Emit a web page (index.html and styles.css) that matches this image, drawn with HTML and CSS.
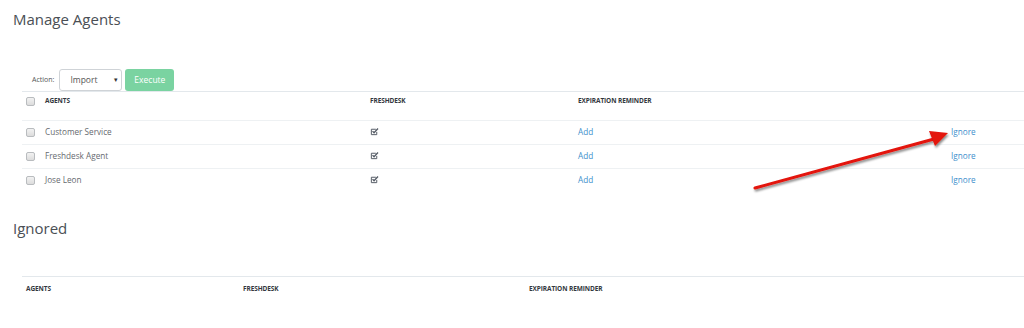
FILE: index.html
```html
<!DOCTYPE html>
<html>
<head>
  <title>Manage Agents</title>
  <link rel="stylesheet" href="styles.css">
</head>
<body>
  <div class="page">
    <h1 class="title">Manage Agents</h1>

    <div class="actions">
      <span class="action-label">Action:</span>
      <div class="select">Import<span class="caret">&#9662;</span></div>
      <button class="execute">Execute</button>
    </div>

    <table class="agents">
      <colgroup>
        <col class="c-check">
        <col class="c-name">
        <col class="c-fd">
        <col class="c-rem">
        <col class="c-act">
      </colgroup>
      <thead>
        <tr>
          <th><span class="box"></span></th>
          <th>Agents</th>
          <th>Freshdesk</th>
          <th>Expiration Reminder</th>
          <th></th>
        </tr>
      </thead>
      <tbody>
        <tr>
          <td><span class="box"></span></td>
          <td>Customer Service</td>
          <td><svg class="tick" viewBox="0 0 10 10"><path d="M7.5 5.5v3h-6v-6h5" fill="none" stroke="#555c66" stroke-width="1.1"/><path d="M2.8 4.6l1.7 1.7 4.4-4.6" fill="none" stroke="#555c66" stroke-width="1.5"/></svg></td>
          <td><a href="#">Add</a></td>
          <td><a href="#">Ignore</a></td>
        </tr>
        <tr>
          <td><span class="box"></span></td>
          <td>Freshdesk Agent</td>
          <td><svg class="tick" viewBox="0 0 10 10"><path d="M7.5 5.5v3h-6v-6h5" fill="none" stroke="#555c66" stroke-width="1.1"/><path d="M2.8 4.6l1.7 1.7 4.4-4.6" fill="none" stroke="#555c66" stroke-width="1.5"/></svg></td>
          <td><a href="#">Add</a></td>
          <td><a href="#">Ignore</a></td>
        </tr>
        <tr>
          <td><span class="box"></span></td>
          <td>Jose Leon</td>
          <td><svg class="tick" viewBox="0 0 10 10"><path d="M7.5 5.5v3h-6v-6h5" fill="none" stroke="#555c66" stroke-width="1.1"/><path d="M2.8 4.6l1.7 1.7 4.4-4.6" fill="none" stroke="#555c66" stroke-width="1.5"/></svg></td>
          <td><a href="#">Add</a></td>
          <td><a href="#">Ignore</a></td>
        </tr>
      </tbody>
    </table>

    <h2 class="subtitle">Ignored</h2>

    <table class="ignored">
      <colgroup>
        <col class="i-name">
        <col class="i-fd">
        <col class="i-rem">
      </colgroup>
      <thead>
        <tr>
          <th>Agents</th>
          <th>Freshdesk</th>
          <th>Expiration Reminder</th>
        </tr>
      </thead>
    </table>
  </div>

  <!-- annotation arrow drawn over the screenshot -->
  <svg class="arrow" width="1024" height="328" viewBox="0 0 1024 328">
    <defs>
      <filter id="shade" x="-10%" y="-50%" width="120%" height="200%">
        <feDropShadow dx="1" dy="2" stdDeviation="1.2" flood-color="#000" flood-opacity="0.45"/>
      </filter>
    </defs>
    <g filter="url(#shade)">
      <line x1="755" y1="188" x2="934" y2="139" stroke="#e3120b" stroke-width="3" stroke-linecap="round"/>
      <polygon points="948,133 929,131 935,146" fill="#e3120b"/>
    </g>
  </svg>
</body>
</html>
```

FILE: styles.css
```css
body {
  margin: 0;
  font-family: "Open Sans", sans-serif;
  background: #ffffff;
  color: #666a70;
}
.page {
  padding: 6px 0 0 13px;
}
.title {
  margin: 0;
  font-size: 15px;
  font-weight: 400;
  line-height: 26px;
  color: #4a4f55;
}
.actions {
  display: flex;
  align-items: center;
  margin: 36px 0 0 19px;
  height: 23px;
}
.action-label {
  font-size: 7px;
  color: #555;
  margin-right: 5px;
}
.select {
  position: relative;
  box-sizing: border-box;
  width: 63px;
  height: 22px;
  border: 1px solid #cfd3d7;
  border-radius: 3px;
  font-size: 8.5px;
  line-height: 19px;
  padding-left: 10px;
  color: #555;
}
.caret {
  position: absolute;
  right: 3px;
  top: 0;
  font-size: 7px;
  color: #333;
}
.execute {
  margin-left: 3px;
  height: 22px;
  width: 49px;
  border: none;
  border-radius: 3px;
  background: #7ad3a1;
  color: #ffffff;
  font-family: "Open Sans", sans-serif;
  font-size: 8.5px;
  padding: 0;
}
table {
  border-collapse: collapse;
  margin-left: 9px;
  table-layout: fixed;
  width: 1010px;
}
th, td {
  text-align: left;
  padding: 0 0 0 4px;
  vertical-align: middle;
}
th {
  font-size: 6.5px;
  font-weight: 700;
  text-transform: uppercase;
  color: #333840;
  letter-spacing: -0.1px;
}
td {
  font-size: 8.2px;
  height: 21px;
  padding-bottom: 2px;
  border-top: 1px solid #eef1f3;
}
.agents thead tr {
  border-top: 1px solid #e3e8ec;
}
.agents thead th {
  height: 24px;
  vertical-align: top;
  padding-top: 4px;
}
.c-check { width: 19px; }
.c-name { width: 325px; }
.c-fd { width: 208px; }
.c-rem { width: 373px; }
.c-act { width: 85px; }
.box {
  display: inline-block;
  box-sizing: border-box;
  width: 9px;
  height: 9px;
  border: 1px solid #b9bcbf;
  border-radius: 2px;
  background: linear-gradient(#f2f2f2, #dcdcdc);
  vertical-align: middle;
}
.agents thead .box {
  margin-top: 1px;
}
.tick {
  display: block;
  width: 9px;
  height: 9px;
}
a {
  color: #3d8fcc;
  text-decoration: none;
}
.subtitle {
  margin: 25px 0 0;
  font-size: 15px;
  font-weight: 400;
  line-height: 22px;
  color: #4a4f55;
}
.ignored {
  margin-top: 37px;
  border-top: 1px solid #e3e8ec;
}
.ignored th {
  height: 18px;
  padding-top: 2px;
}
.i-name { width: 217px; }
.i-fd { width: 286px; }
.i-rem { width: 507px; }
.arrow {
  position: absolute;
  top: 0;
  left: 0;
  pointer-events: none;
}
```
